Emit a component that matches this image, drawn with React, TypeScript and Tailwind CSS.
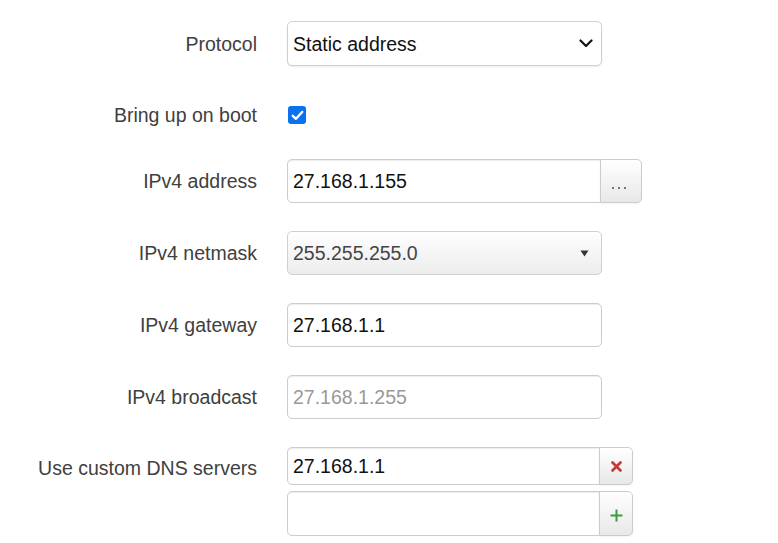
import React from "react";

const font = { fontFamily: '"Liberation Sans", Arial, sans-serif' };

function Row({
  label,
  className = "",
  children,
}: {
  label: string;
  className?: string;
  children: React.ReactNode;
}) {
  return (
    <div className={`flex items-center ${className}`}>
      <div className="w-[257px] shrink-0 pt-[2px] text-right text-[19.5px] text-[#404040]">{label}</div>
      <div className="ml-[30px] flex items-center">{children}</div>
    </div>
  );
}

function TextBox({ value, placeholder, w = "w-[315px]", h = "h-[44px]", attached = false }: {
  value?: string;
  placeholder?: string;
  w?: string;
  h?: string;
  attached?: boolean;
}) {
  return (
    <div
      className={`${w} ${h} flex items-center border border-[#cccccc] bg-white pl-[5px] pt-[2px] text-[19.5px] shadow-[inset_0_1px_1px_rgba(0,0,0,0.075)] ${
        attached ? "rounded-l-[5px]" : "rounded-[5px]"
      }`}
    >
      {value ? (
        <span className="text-[#111]">{value}</span>
      ) : (
        <span className="text-[#999]">{placeholder}</span>
      )}
    </div>
  );
}

function AddonButton({ w, h = "h-[44px]", children }: { w: string; h?: string; children: React.ReactNode }) {
  return (
    <div
      className={`${w} ${h} -ml-px flex items-center justify-center rounded-r-[5px] border border-[#cccccc] bg-gradient-to-b from-white to-[#e8e8e8] shadow-[0_1px_2px_rgba(0,0,0,0.05)]`}
    >
      {children}
    </div>
  );
}

export default function App() {
  return (
    <div className="min-h-[543px] w-[778px] bg-white" style={font}>
      <div className="flex flex-col pt-[21px]">
        <Row label="Protocol">
          <div className="flex h-[45px] w-[315px] items-center justify-between rounded-[5px] border border-[#d0d0d0] bg-white pl-[5px] pr-[8px] pt-[2px] text-[19.5px] text-[#111] shadow-[0_1px_2px_rgba(0,0,0,0.08)]">
            <span>Static address</span>
            <svg width="14" height="9" viewBox="0 0 14 9" className="-mt-[2px]">
              <path d="M1.5 1.5 L7 7 L12.5 1.5" fill="none" stroke="#111" strokeWidth="2.2" strokeLinecap="round" strokeLinejoin="round" />
            </svg>
          </div>
        </Row>

        <Row label="Bring up on boot" className="mt-[32px] h-[34px]">
          <div className="ml-px flex h-[18px] w-[18px] items-center justify-center rounded-[3px] bg-[#0b72ef]">
            <svg width="13" height="11" viewBox="0 0 13 11">
              <path d="M1.8 5.8 L5 8.8 L11.2 2" fill="none" stroke="white" strokeWidth="2.4" strokeLinecap="round" strokeLinejoin="round" />
            </svg>
          </div>
        </Row>

        <Row label="IPv4 address" className="mt-[27px]">
          <TextBox value="27.168.1.155" w="w-[314px]" attached />
          <AddonButton w="w-[42px]">
            <div className="mr-[4px] mt-[14px] flex gap-[4px]">
              <span className="h-[2px] w-[2px] bg-[#777]" />
              <span className="h-[2px] w-[2px] bg-[#777]" />
              <span className="h-[2px] w-[2px] bg-[#777]" />
            </div>
          </AddonButton>
        </Row>

        <Row label="IPv4 netmask" className="mt-[28px]">
          <div className="flex h-[44px] w-[315px] items-center justify-between rounded-[5px] border border-[#d0d0d0] bg-gradient-to-b from-white to-[#ececec] pl-[5px] pr-[12px] pt-[2px] text-[19.5px] text-[#444]">
            <span>255.255.255.0</span>
            <svg width="9" height="7" viewBox="0 0 9 7" className="-mt-[2px]">
              <path d="M0.5 0.5 L8.5 0.5 L4.5 6.5 Z" fill="#333" />
            </svg>
          </div>
        </Row>

        <Row label="IPv4 gateway" className="mt-[28px]">
          <TextBox value="27.168.1.1" />
        </Row>

        <Row label="IPv4 broadcast" className="mt-[28px]">
          <TextBox placeholder="27.168.1.255" />
        </Row>

        <div className="mt-[28px] flex">
          <div className="flex h-[44px] w-[257px] shrink-0 items-center justify-end text-[19.5px] text-[#404040]">
            Use custom DNS servers
          </div>
          <div className="ml-[30px] flex flex-col gap-[6px]">
            <div className="flex">
              <TextBox value="27.168.1.1" w="w-[313px]" h="h-[38px]" attached />
              <AddonButton w="w-[34px]" h="h-[38px]">
                <svg width="11" height="11" viewBox="0 0 11 11">
                  <path d="M1.5 1.5 L9.5 9.5 M9.5 1.5 L1.5 9.5" stroke="#cc3333" strokeWidth="2.6" strokeLinecap="round" />
                </svg>
              </AddonButton>
            </div>
            <div className="flex">
              <TextBox w="w-[313px]" h="h-[45px]" attached />
              <AddonButton w="w-[34px]" h="h-[45px]">
                <svg width="13" height="13" viewBox="0 0 13 13" className="mt-[4px]">
                  <path d="M6.5 0.5 L6.5 12.5 M0.5 6.5 L12.5 6.5" stroke="#3f9a3f" strokeWidth="2" />
                </svg>
              </AddonButton>
            </div>
          </div>
        </div>
      </div>
    </div>
  );
}
